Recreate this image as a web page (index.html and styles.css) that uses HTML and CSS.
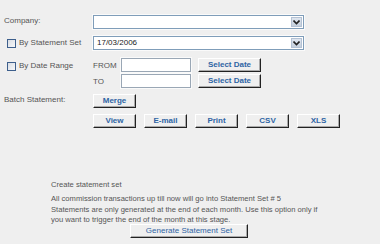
FILE: index.html
```html
<!DOCTYPE html>
<html>
<head>
<meta charset="utf-8">
<link rel="stylesheet" href="styles.css">
</head>
<body>
<div class="form">
  <div class="row">
    <span class="lbl">Company:</span>
    <div class="select"><span class="val"></span><span class="arrow"><svg width="7" height="5" viewBox="0 0 7 5"><path d="M0.5 0.5 L3.5 3.5 L6.5 0.5" fill="none" stroke="#222" stroke-width="1.6"/></svg></span></div>
  </div>
  <div class="row">
    <label class="lbl chk"><span class="box"></span>By Statement Set</label>
    <div class="select"><span class="val">17/03/2006</span><span class="arrow"><svg width="7" height="5" viewBox="0 0 7 5"><path d="M0.5 0.5 L3.5 3.5 L6.5 0.5" fill="none" stroke="#222" stroke-width="1.6"/></svg></span></div>
  </div>
  <div class="row top">
    <label class="lbl chk dr"><span class="box"></span>By Date Range</label>
    <div class="dates">
      <div class="drow"><span class="dl">FROM</span><span class="input"></span><button class="btn sd">Select Date</button></div>
      <div class="drow"><span class="dl">TO</span><span class="input"></span><button class="btn sd">Select Date</button></div>
    </div>
  </div>
  <div class="row batch">
    <span class="lbl">Batch Statement:</span>
    <button class="btn sm">Merge</button>
  </div>
  <div class="row acts">
    <span class="lbl"></span>
    <div class="btns">
      <button class="btn sm">View</button>
      <button class="btn sm">E-mail</button>
      <button class="btn sm">Print</button>
      <button class="btn sm">CSV</button>
      <button class="btn sm">XLS</button>
    </div>
  </div>
</div>
<div class="create">
  <p class="title">Create statement set</p>
  <p class="desc">All commission transactions up till now will go into Statement Set # 5<br>Statements are only generated at the end of each month. Use this option only if<br>you want to trigger the end of the month at this stage.</p>
  <div class="gen"><button class="btn gs">Generate Statement Set</button></div>
</div>
</body>
</html>
```
FILE: styles.css
```css
html, body {
  margin: 0;
  padding: 0;
  background: #efefef;
}
body {
  font-family: "Liberation Sans", Arial, sans-serif;
  font-size: 8px;
  color: #555;
  width: 380px;
  height: 244px;
  overflow: hidden;
}
.form {
  padding: 15px 0 0 4px;
  display: flex;
  flex-direction: column;
}
.row {
  display: flex;
  align-items: center;
  height: 14px;
  margin-bottom: 7px;
}
.row.top {
  align-items: flex-start;
  height: 30px;
  margin-top: 1px;
  margin-bottom: 6px;
}
.row.batch {
  margin-bottom: 6px;
}
.lbl {
  width: 89px;
  flex: none;
  line-height: 12px;
  margin-top: -2px;
}
.chk {
  display: flex;
  align-items: center;
  margin-top: 0;
}
.chk.dr {
  height: 14px;
  margin-top: 1px;
}
.box {
  width: 7px;
  height: 7px;
  border: 1px solid #3d5f8c;
  background: linear-gradient(135deg, #d8dde4, #f6f7f9);
  margin: 0 3px 0 3px;
  flex: none;
}
.select {
  width: 209px;
  height: 12px;
  border: 1px solid #7f9db9;
  background: #fff;
  box-shadow: 0 0 0 1px #fafafa;
  display: flex;
  align-items: center;
  justify-content: space-between;
  color: #222;
}
.select .val {
  padding-left: 3px;
  line-height: 12px;
}
.arrow {
  width: 11px;
  height: 10px;
  margin-right: 1px;
  background: linear-gradient(#dfe6f0, #c4cfdc);
  border: 1px solid #b4c2d4;
  box-sizing: border-box;
  display: flex;
  align-items: center;
  justify-content: center;
}
.dates {
  display: flex;
  flex-direction: column;
  gap: 2px;
}
.drow {
  display: flex;
  align-items: center;
  height: 14px;
}
.dl {
  width: 28px;
}
.input {
  width: 68px;
  height: 12px;
  border: 1px solid #9aa7b5;
  background: #fff;
  box-shadow: 0 0 0 1px #fafafa;
  margin-right: 7px;
}
.btn {
  font-family: "Liberation Sans", Arial, sans-serif;
  font-size: 8px;
  font-weight: bold;
  color: #2e64a4;
  background: #efefef;
  border: 1px solid;
  border-color: #fff #222 #222 #fff;
  box-shadow: inset -1px -1px 0 #aaa;
  height: 14px;
  padding: 0 0 1px;
  margin: 0;
  line-height: 11px;
}
.sd {
  width: 63px;
}
.sm {
  width: 43px;
}
.btns {
  display: flex;
  gap: 8px;
}
.create {
  padding-left: 51px;
  margin-top: 45px;
  font-size: 7.6px;
}
.create p {
  margin: 0;
}
.title {
  line-height: 10px;
  margin-bottom: 4px !important;
}
.desc {
  line-height: 10.5px;
}
.gen {
  padding-left: 79px;
  margin-top: -2px;
}
.gs {
  width: 118px;
  font-weight: normal;
}
```
